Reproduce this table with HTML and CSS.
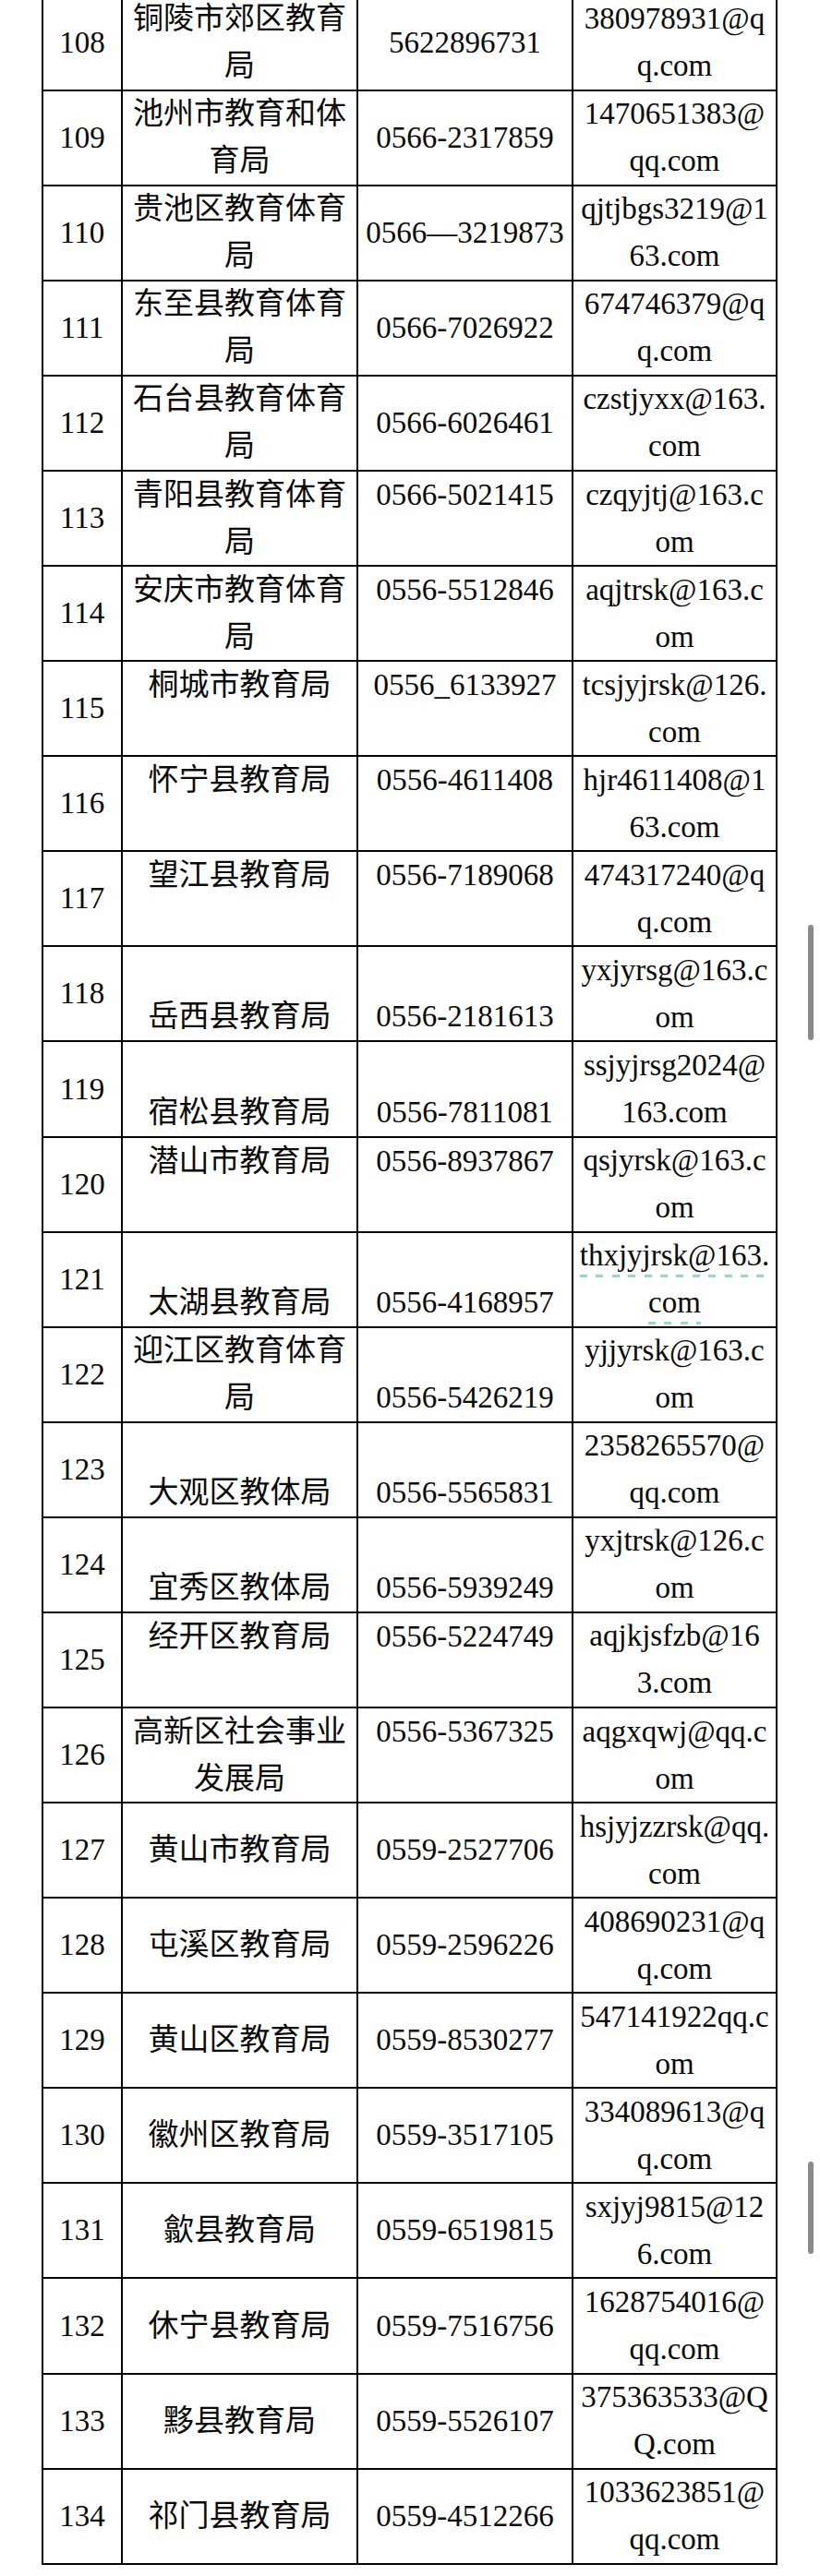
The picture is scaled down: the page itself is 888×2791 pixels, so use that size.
FILE: index.html
```html
<!DOCTYPE html>
<html lang="zh-CN">
<head>
<meta charset="utf-8">
<title>教育局联系方式</title>
<link rel="stylesheet" href="styles.css">
</head>
<body>
<div class="sheet">
  <div class="cell num"><span>108</span></div>
  <div class="cell name"><span>铜陵市郊区教育<br>局</span></div>
  <div class="cell phone"><span>5622896731</span></div>
  <div class="cell mail"><span>380978931@q<br>q.com</span></div>

  <div class="cell num"><span>109</span></div>
  <div class="cell name"><span>池州市教育和体<br>育局</span></div>
  <div class="cell phone"><span>0566-2317859</span></div>
  <div class="cell mail"><span>1470651383@<br>qq.com</span></div>

  <div class="cell num"><span>110</span></div>
  <div class="cell name"><span>贵池区教育体育<br>局</span></div>
  <div class="cell phone"><span>0566—3219873</span></div>
  <div class="cell mail"><span>qjtjbgs3219@1<br>63.com</span></div>

  <div class="cell num"><span>111</span></div>
  <div class="cell name"><span>东至县教育体育<br>局</span></div>
  <div class="cell phone"><span>0566-7026922</span></div>
  <div class="cell mail"><span>674746379@q<br>q.com</span></div>

  <div class="cell num"><span>112</span></div>
  <div class="cell name"><span>石台县教育体育<br>局</span></div>
  <div class="cell phone"><span>0566-6026461</span></div>
  <div class="cell mail"><span>czstjyxx@163.<br>com</span></div>

  <div class="cell num"><span>113</span></div>
  <div class="cell name"><span>青阳县教育体育<br>局</span></div>
  <div class="cell phone top"><span>0566-5021415</span></div>
  <div class="cell mail"><span>czqyjtj@163.c<br>om</span></div>

  <div class="cell num"><span>114</span></div>
  <div class="cell name"><span>安庆市教育体育<br>局</span></div>
  <div class="cell phone top"><span>0556-5512846</span></div>
  <div class="cell mail"><span>aqjtrsk@163.c<br>om</span></div>

  <div class="cell num"><span>115</span></div>
  <div class="cell name top"><span>桐城市教育局</span></div>
  <div class="cell phone top"><span>0556_6133927</span></div>
  <div class="cell mail"><span>tcsjyjrsk@126.<br>com</span></div>

  <div class="cell num"><span>116</span></div>
  <div class="cell name top"><span>怀宁县教育局</span></div>
  <div class="cell phone top"><span>0556-4611408</span></div>
  <div class="cell mail"><span>hjr4611408@1<br>63.com</span></div>

  <div class="cell num"><span>117</span></div>
  <div class="cell name top"><span>望江县教育局</span></div>
  <div class="cell phone top"><span>0556-7189068</span></div>
  <div class="cell mail"><span>474317240@q<br>q.com</span></div>

  <div class="cell num"><span>118</span></div>
  <div class="cell name bot"><span>岳西县教育局</span></div>
  <div class="cell phone bot"><span>0556-2181613</span></div>
  <div class="cell mail"><span>yxjyrsg@163.c<br>om</span></div>

  <div class="cell num"><span>119</span></div>
  <div class="cell name bot"><span>宿松县教育局</span></div>
  <div class="cell phone bot"><span>0556-7811081</span></div>
  <div class="cell mail"><span>ssjyjrsg2024@<br>163.com</span></div>

  <div class="cell num"><span>120</span></div>
  <div class="cell name top"><span>潜山市教育局</span></div>
  <div class="cell phone top"><span>0556-8937867</span></div>
  <div class="cell mail"><span>qsjyrsk@163.c<br>om</span></div>

  <div class="cell num"><span>121</span></div>
  <div class="cell name bot"><span>太湖县教育局</span></div>
  <div class="cell phone bot"><span>0556-4168957</span></div>
  <div class="cell mail"><span><span class="link">thxjyjrsk@163.</span><br><span class="link">com</span></span></div>

  <div class="cell num"><span>122</span></div>
  <div class="cell name"><span>迎江区教育体育<br>局</span></div>
  <div class="cell phone bot"><span>0556-5426219</span></div>
  <div class="cell mail"><span>yjjyrsk@163.c<br>om</span></div>

  <div class="cell num"><span>123</span></div>
  <div class="cell name bot"><span>大观区教体局</span></div>
  <div class="cell phone bot"><span>0556-5565831</span></div>
  <div class="cell mail"><span>2358265570@<br>qq.com</span></div>

  <div class="cell num"><span>124</span></div>
  <div class="cell name bot"><span>宜秀区教体局</span></div>
  <div class="cell phone bot"><span>0556-5939249</span></div>
  <div class="cell mail"><span>yxjtrsk@126.c<br>om</span></div>

  <div class="cell num"><span>125</span></div>
  <div class="cell name top"><span>经开区教育局</span></div>
  <div class="cell phone top"><span>0556-5224749</span></div>
  <div class="cell mail"><span>aqjkjsfzb@16<br>3.com</span></div>

  <div class="cell num"><span>126</span></div>
  <div class="cell name"><span>高新区社会事业<br>发展局</span></div>
  <div class="cell phone top"><span>0556-5367325</span></div>
  <div class="cell mail"><span>aqgxqwj@qq.c<br>om</span></div>

  <div class="cell num"><span>127</span></div>
  <div class="cell name"><span>黄山市教育局</span></div>
  <div class="cell phone"><span>0559-2527706</span></div>
  <div class="cell mail"><span>hsjyjzzrsk@qq.<br>com</span></div>

  <div class="cell num"><span>128</span></div>
  <div class="cell name"><span>屯溪区教育局</span></div>
  <div class="cell phone"><span>0559-2596226</span></div>
  <div class="cell mail"><span>408690231@q<br>q.com</span></div>

  <div class="cell num"><span>129</span></div>
  <div class="cell name"><span>黄山区教育局</span></div>
  <div class="cell phone"><span>0559-8530277</span></div>
  <div class="cell mail"><span>547141922qq.c<br>om</span></div>

  <div class="cell num"><span>130</span></div>
  <div class="cell name"><span>徽州区教育局</span></div>
  <div class="cell phone"><span>0559-3517105</span></div>
  <div class="cell mail"><span>334089613@q<br>q.com</span></div>

  <div class="cell num"><span>131</span></div>
  <div class="cell name"><span>歙县教育局</span></div>
  <div class="cell phone"><span>0559-6519815</span></div>
  <div class="cell mail"><span>sxjyj9815@12<br>6.com</span></div>

  <div class="cell num"><span>132</span></div>
  <div class="cell name"><span>休宁县教育局</span></div>
  <div class="cell phone"><span>0559-7516756</span></div>
  <div class="cell mail"><span>1628754016@<br>qq.com</span></div>

  <div class="cell num"><span>133</span></div>
  <div class="cell name"><span>黟县教育局</span></div>
  <div class="cell phone"><span>0559-5526107</span></div>
  <div class="cell mail"><span>375363533@Q<br>Q.com</span></div>

  <div class="cell num"><span>134</span></div>
  <div class="cell name"><span>祁门县教育局</span></div>
  <div class="cell phone"><span>0559-4512266</span></div>
  <div class="cell mail"><span>1033623851@<br>qq.com</span></div>
</div>
<div class="thumb thumb-a"></div>
<div class="thumb thumb-b"></div>
</body>
</html>
```
FILE: styles.css
```css
html, body {
  margin: 0;
  padding: 0;
  background: #ffffff;
}

body {
  font-family: "Liberation Serif", "Noto Sans CJK SC", serif;
  font-size: 33px;
  line-height: 51px;
  color: #0a0a0a;
}

.sheet {
  display: grid;
  grid-template-columns: 86px 255px 233px 221px;
  grid-auto-rows: 103.08px;
  width: max-content;
  margin: -6.4px 0 0 45px;
  border-left: 2px solid #050505;
  border-top: 2px solid #050505;
}

.cell {
  border-right: 2px solid #050505;
  border-bottom: 2px solid #050505;
  display: flex;
  flex-direction: column;
  justify-content: center;
  align-items: center;
  text-align: center;
  overflow: hidden;
}

.cell > span {
  display: block;
}

.cell.top {
  justify-content: flex-start;
}

.cell.bot {
  justify-content: flex-end;
}

.mail > span,
.phone > span,
.num > span {
  white-space: nowrap;
}

.link {
  padding-bottom: 6px;
  background-image: repeating-linear-gradient(to right, #8edfba 0 8px, transparent 8px 17.4px);
  background-size: 100% 3px;
  background-position: 0 100%;
  background-repeat: no-repeat;
}

.thumb {
  position: absolute;
  left: 875px;
  width: 6px;
  border-radius: 3px;
  background: #8a8a8a;
}

.thumb-a {
  top: 1002px;
  height: 125px;
}

.thumb-b {
  top: 2342px;
  height: 100px;
}
```
